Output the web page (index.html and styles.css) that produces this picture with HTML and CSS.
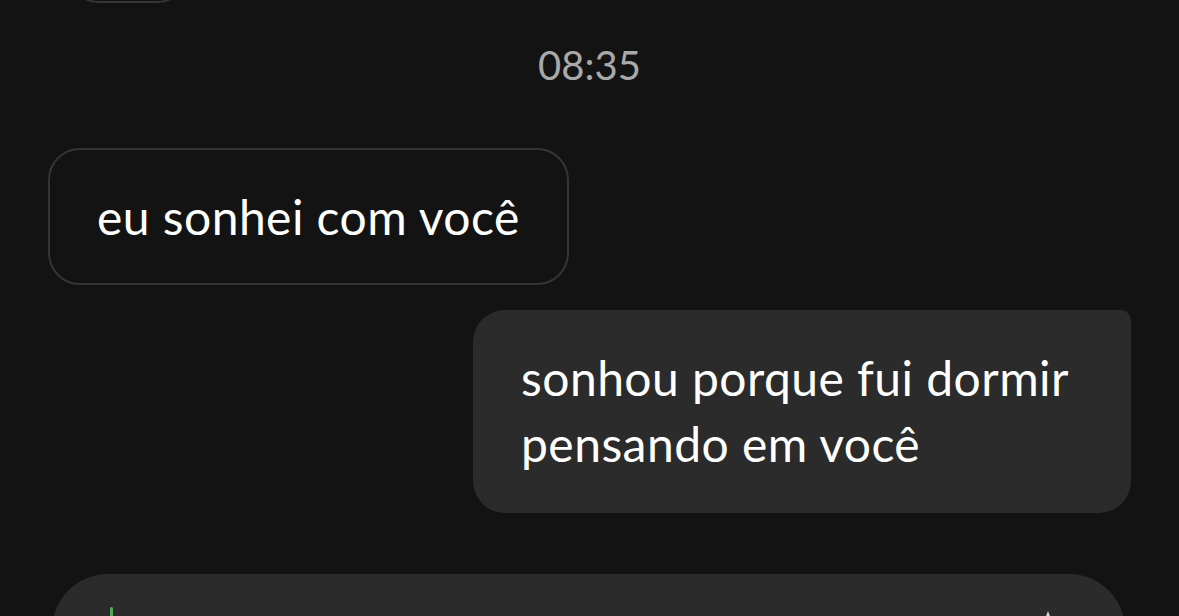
FILE: index.html
```html
<!DOCTYPE html>
<html lang="pt">
<head>
<meta charset="utf-8">
<link rel="stylesheet" href="styles.css">
</head>
<body>
<div class="chat">
  <div class="bubble received prev"></div>
  <div class="time">08:35</div>
  <div class="bubble received msg1">eu sonhei com você</div>
  <div class="bubble sent msg2">sonhou porque fui dormir pensando em você</div>
  <div class="composer">
    <span class="caret"></span>
    <svg class="tool" width="20" height="20" viewBox="0 0 20 20"><path d="M10 2 L13 10 L7 10 Z" fill="#d8d8d8"/></svg>
  </div>
</div>
</body>
</html>
```
FILE: styles.css
```css
html, body {
  margin: 0;
  padding: 0;
  background: #131313;
  height: 616px;
  overflow: hidden;
}
.chat {
  display: flex;
  flex-direction: column;
  padding: 0 48px;
  font-family: "Lato", "Noto Sans", sans-serif;
  color: #ffffff;
}
.bubble {
  box-sizing: border-box;
  font-size: 48px;
  letter-spacing: 0.45px;
  line-height: 66px;
}
.received {
  align-self: flex-start;
  border: 2px solid #353535;
  border-radius: 32px;
}
.prev {
  margin-top: -60px;
  margin-left: 22px;
  width: 116px;
  height: 63px;
  border-radius: 28px;
}
.time {
  align-self: center;
  margin-top: 40px;
  font-size: 40px;
  line-height: 44px;
  color: #a9a9a9;
}
.msg1 {
  margin-top: 61px;
  height: 137px;
  padding: 0 47px;
  display: flex;
  align-items: center;
}
.sent {
  align-self: flex-end;
  background: #2b2b2b;
  border-radius: 32px 10px 32px 32px;
}
.msg2 {
  margin-top: 25px;
  width: 658px;
  height: 203px;
  padding: 35px 48px 0 48px;
}
.composer {
  margin: 61px 6px 0 4px;
  height: 120px;
  background: #2b2b2b;
  border-radius: 56px;
  position: relative;
}
.caret {
  position: absolute;
  left: 58px;
  top: 33px;
  width: 3px;
  height: 40px;
  border-radius: 2px;
  background: #4caf50;
}
.tool {
  position: absolute;
  left: 986px;
  top: 35px;
}
```
